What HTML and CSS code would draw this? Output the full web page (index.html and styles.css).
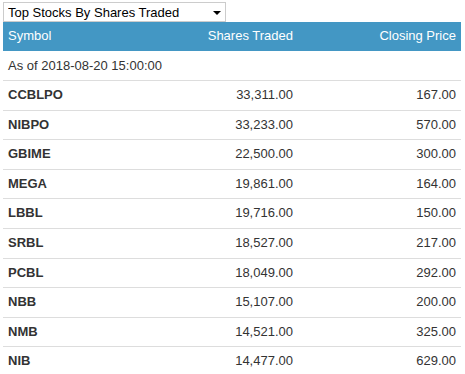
FILE: index.html
```html
<!DOCTYPE html>
<html>
<head>
<meta charset="utf-8">
<link rel="stylesheet" href="styles.css">
</head>
<body>
<div class="picker">
  <select class="picker-select">
    <option>Top Stocks By Shares Traded</option>
  </select>
  <svg class="picker-arrow" width="8" height="4" viewBox="0 0 8 4"><path d="M0 0H8L4 4Z" fill="#000"/></svg>
</div>
<table class="stocks">
  <colgroup>
    <col class="c1"><col class="c2"><col class="c3">
  </colgroup>
  <thead>
    <tr><th class="l">Symbol</th><th class="r">Shares Traded</th><th class="r">Closing Price</th></tr>
  </thead>
  <tbody>
    <tr><td colspan="3" class="asof">As of 2018-08-20 15:00:00</td></tr>
    <tr><td class="sym">CCBLPO</td><td class="r">33,311.00</td><td class="r">167.00</td></tr>
    <tr><td class="sym">NIBPO</td><td class="r">33,233.00</td><td class="r">570.00</td></tr>
    <tr><td class="sym">GBIME</td><td class="r">22,500.00</td><td class="r">300.00</td></tr>
    <tr><td class="sym">MEGA</td><td class="r">19,861.00</td><td class="r">164.00</td></tr>
    <tr><td class="sym">LBBL</td><td class="r">19,716.00</td><td class="r">150.00</td></tr>
    <tr><td class="sym">SRBL</td><td class="r">18,527.00</td><td class="r">217.00</td></tr>
    <tr><td class="sym">PCBL</td><td class="r">18,049.00</td><td class="r">292.00</td></tr>
    <tr><td class="sym">NBB</td><td class="r">15,107.00</td><td class="r">200.00</td></tr>
    <tr><td class="sym">NMB</td><td class="r">14,521.00</td><td class="r">325.00</td></tr>
    <tr><td class="sym">NIB</td><td class="r">14,477.00</td><td class="r">629.00</td></tr>
  </tbody>
</table>
</body>
</html>
```

FILE: styles.css
```css
html, body {
  margin: 0;
  background: #fff;
}
body {
  padding: 2px 4px 0 3px;
  font-family: "Liberation Sans", Arial, sans-serif;
  font-size: 13px;
  line-height: 1.42857143;
  color: #333;
}
.picker {
  position: relative;
  width: 223px;
  height: 20px;
}
.picker-select {
  appearance: none;
  -webkit-appearance: none;
  display: block;
  width: 223px;
  height: 20px;
  margin: 0;
  padding: 0 0 0 4px;
  border: 1px solid #ccc;
  border-radius: 0;
  background: #fff;
  font-family: "Liberation Sans", Arial, sans-serif;
  font-size: 13px;
  color: #000;
  outline: none;
}
.picker-arrow {
  position: absolute;
  right: 5px;
  top: 9px;
}
.stocks {
  width: 458px;
  border-collapse: collapse;
  table-layout: fixed;
}
.c1 { width: 150px; }
.c2 { width: 145px; }
.c3 { width: 163px; }
.stocks th {
  background: #4397c4;
  color: #fff;
  font-weight: normal;
  padding: 5px;
  height: 18.57px;
  box-sizing: content-box;
}
.stocks td {
  padding: 5px;
  border-top: 1px solid #ddd;
}
.stocks tbody tr:first-child td {
  border-top: 0;
  padding-top: 6px;
}
.l { text-align: left; }
.r { text-align: right; }
.sym { font-weight: bold; }
.asof { text-align: left; }
```
